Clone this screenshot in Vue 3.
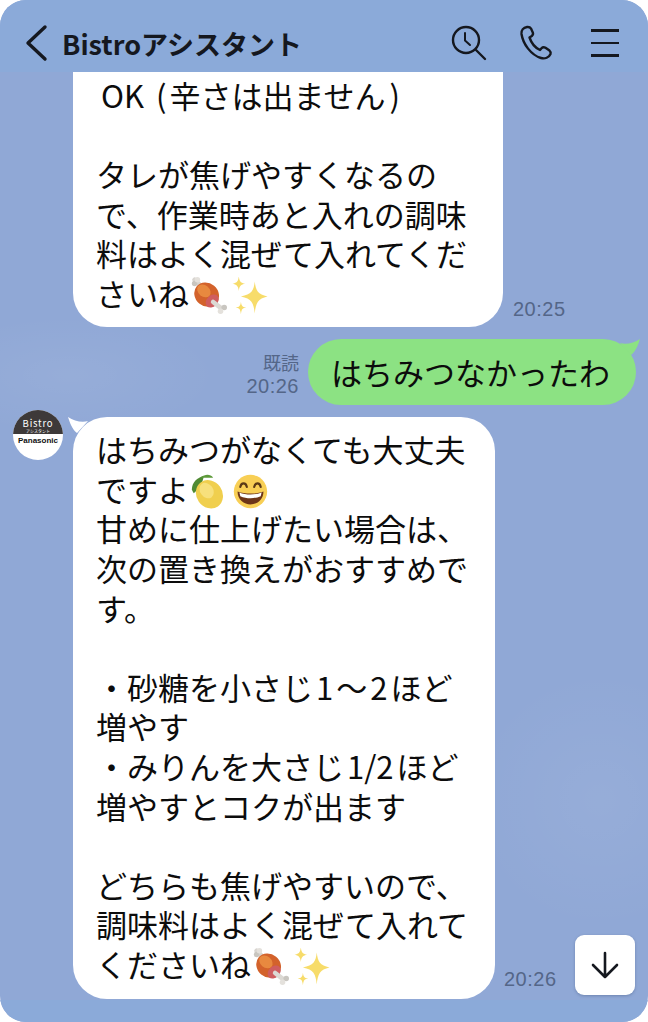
<script setup>
</script>

<template>
  <div class="screen">
    <header class="topbar">
      <svg class="back" width="26" height="38" viewBox="0 0 26 38" fill="none">
        <path d="M22 3 L5 19 L22 35" stroke="#15181f" stroke-width="3.4" stroke-linecap="round" stroke-linejoin="round" />
      </svg>
      <h1 class="title">Bistroアシスタント</h1>
      <div class="actions">
        <svg width="36" height="36" viewBox="0 0 36 36" fill="none" stroke="#15181f" stroke-width="2.4" stroke-linecap="round" stroke-linejoin="round">
          <circle cx="15" cy="15" r="13" />
          <path d="M14 8 V15.5 L19 20" stroke-width="2" />
          <path d="M25 25 L34 34" />
        </svg>
        <svg width="34" height="36" viewBox="0 0 34 36" fill="none" stroke="#15181f" stroke-width="2.4" stroke-linecap="round" stroke-linejoin="round">
          <path d="M8 2 C4.5 2.500 2 5 2.500 9 C4 19 12 30 22 33 C26 34.200 30 32.500 31.500 29 C32 27.500 31.500 26.500 30.500 25.600 L26.500 22.800 C25 21.800 23.600 22 22.500 23.200 L21 25 C15.500 22.500 12 17 10.500 12.500 L12.800 11 C14 10 14.300 8.800 13.800 7.400 L12 3.600 C11.300 2.400 9.800 1.800 8 2 Z" />
        </svg>
        <div class="menu"><span></span><span></span><span></span></div>
      </div>
    </header>

    <main class="chat">
      <div class="row first">
        <div class="bubble cut">
          <span class="ok">OK <span class="po">(</span>辛さは出ません<span class="pc">)</span></span><br /><br />
          タレが焦げやすくなるの<br />
          で、作業時あと入れの調味<br />
          料はよく混ぜて入れてくだ<br />
          さいね<svg class="emoji" viewBox="0 0 40 40">
            <use href="#meat-icon" />
          </svg><svg class="emoji" viewBox="0 0 40 40">
            <use href="#sparkle-icon" />
          </svg>
        </div>
        <time class="stamp">20:25</time>
      </div>

      <div class="row mine">
        <div class="meta">
          <span>既読</span>
          <time>20:26</time>
        </div>
        <div class="bubble green">
          はちみつなかったわ
          <svg class="tail right" width="20" height="16" viewBox="0 0 20 16">
            <path d="M0 4 C6 6 14 4 20 0 C18 6 16 12 11 16 Z" fill="#8ce283" />
          </svg>
        </div>
      </div>

      <div class="row theirs">
        <div class="avatar">
          <div class="avatar-top">
            <span class="brand">Bistro</span>
            <span class="brand-sub">アシスタント</span>
          </div>
          <div class="avatar-bottom">Panasonic</div>
        </div>
        <div class="bubble wide">
          <svg class="tail left" width="20" height="16" viewBox="0 0 20 16">
            <path d="M20 4 C14 6 6 4 0 0 C2 6 4 12 9 16 Z" fill="#fff" />
          </svg>
          はちみつがなくても大丈夫<br />
          ですよ<svg class="emoji" viewBox="0 0 40 40">
            <use href="#lemon-icon" />
          </svg><svg class="emoji" viewBox="0 0 40 40">
            <use href="#grin-icon" />
          </svg><br />
          甘めに仕上げたい場合は、<br />
          次の置き換えがおすすめで<br />
          す。<br /><br />
          ・砂糖を小さじ<span class="num">1</span>〜<span class="num">2</span>ほど<br />
          増やす<br />
          ・みりんを大さじ<span class="num">1/2</span>ほど<br />
          増やすとコクが出ます<br /><br />
          どちらも焦げやすいので、<br />
          調味料はよく混ぜて入れて<br />
          くださいね<svg class="emoji" viewBox="0 0 40 40">
            <use href="#meat-icon" />
          </svg><svg class="emoji" viewBox="0 0 40 40">
            <use href="#sparkle-icon" />
          </svg>
        </div>
        <time class="stamp">20:26</time>
      </div>
    </main>

    <button class="down">
      <svg width="30" height="30" viewBox="0 0 30 30" fill="none" stroke="#15181f" stroke-width="2.6" stroke-linecap="round" stroke-linejoin="round">
        <path d="M15 3 V27 M3 15 L15 27 L27 15" />
      </svg>
    </button>

    <svg class="defs" width="0" height="0">
      <defs>
        <g id="meat-icon">
          <path d="M5 3 L13 11" stroke="#d8d5d0" stroke-width="5" stroke-linecap="round" />
          <circle cx="5" cy="7" r="3" fill="#c9c6c0" />
          <circle cx="8" cy="3" r="3" fill="#e4e1dc" />
          <ellipse cx="18" cy="19" rx="14" ry="12.500" transform="rotate(40 18 19)" fill="#d3622b" />
          <ellipse cx="15" cy="15" rx="8" ry="6" transform="rotate(40 15 15)" fill="#e8893f" />
          <ellipse cx="24" cy="26" rx="8" ry="6" transform="rotate(-45 24 26)" fill="#cf5d5f" />
          <path d="M25 27 L34 34" stroke="#dcd9d4" stroke-width="5" stroke-linecap="round" />
          <circle cx="37" cy="33" r="3" fill="#c9c6c0" />
          <circle cx="33" cy="37" r="3" fill="#e4e1dc" />
        </g>
        <g id="sparkle-icon" fill="#f7dc6a" transform="translate(-3 -2) scale(1.15)">
          <path d="M24 6 C25 15 27 18 36 20 C27 22 25 26 24 36 C23 26 21 22 11 20 C21 18 23 15 24 6 Z" />
          <path d="M9 1 C9.500 6 11 7.500 15 8 C11 8.500 9.500 10 9 15 C8.500 10 7 8.500 3 8 C7 7.500 8.500 6 9 1 Z" />
          <path d="M11 25 C11.500 29 12.500 30 16 30.500 C12.500 31 11.500 32 11 37 C10.500 32 9.500 31 6 30.500 C9.500 30 10.500 29 11 25 Z" />
        </g>
        <g id="lemon-icon">
          <path d="M2 18 C2 10 8 5 15 3 C14 10 10 17 4 22 Z" fill="#4f8a32" />
          <path d="M12 5 C16 1 22 1 25 5 Z" fill="#5d9a3a" />
          <ellipse cx="21" cy="23" rx="16" ry="14" transform="rotate(55 21 23)" fill="#f0cf4e" />
          <ellipse cx="18" cy="19" rx="9" ry="7" transform="rotate(55 18 19)" fill="#f7e07c" />
        </g>
        <g id="grin-icon">
          <circle cx="20" cy="20" r="18" fill="#f8cf55" />
          <path d="M9 15 C10 10 15 10 16 15 M24 15 C25 10 30 10 31 15" fill="none" stroke="#5b3a17" stroke-width="2.400" stroke-linecap="round" />
          <path d="M6 20 C14 23 26 23 34 20 C34 29 27 34 20 34 C13 34 6 29 6 20 Z" fill="#6d3518" />
          <path d="M8 21 C15 24 25 24 32 21 L31 25 C24 28 16 28 9 25 Z" fill="#fff" />
        </g>
      </defs>
    </svg>
  </div>
</template>

<style scoped>
.screen {
  position: relative;
  width: 648px;
  height: 1022px;
  border-radius: 26px;
  overflow: hidden;
  display: flex;
  flex-direction: column;
  color: #111;
  font-family: "Noto Sans CJK JP", "Noto Sans", sans-serif;
  background:
    radial-gradient(ellipse 150px 60px at 70px 375px, rgba(255, 255, 255, 0.06), transparent),
    radial-gradient(ellipse 130px 130px at 600px 800px, rgba(255, 255, 255, 0.06), transparent),
    #90a8d6;
}

.topbar {
  height: 72px;
  box-sizing: border-box;
  flex-shrink: 0;
  display: flex;
  align-items: center;
  padding: 14px 29px 0 23px;
  background: #8baad9;
}

.back {
  margin-right: 13px;
}

.title {
  margin: 0;
  flex: 1;
  font-size: 27px;
  font-weight: 700;
  color: #15181f;
}

.actions {
  display: flex;
  align-items: center;
  gap: 32px;
}

.menu {
  width: 28px;
  margin-left: 6px;
  display: flex;
  flex-direction: column;
  gap: 10px;
}

.menu span {
  height: 2.400px;
  background: #15181f;
}

.chat {
  flex: 1;
  min-height: 0;
  display: flex;
  flex-direction: column;
  border-bottom: 22px solid #8baad9;
}

.row {
  display: flex;
  align-items: flex-end;
}

.first {
  padding-left: 73px;
}

.mine {
  justify-content: flex-end;
  margin-top: 12.500px;
  padding-right: 12px;
}

.theirs {
  margin-top: 12.500px;
  align-items: flex-start;
  padding-left: 13px;
}

.bubble {
  position: relative;
  padding: 12px 24px 16px 23px;
  background: #fff;
  border-radius: 34px;
  font-size: 31px;
  line-height: 39.600px;
  white-space: nowrap;
  color: #0c0c0c;
}

.cut {
  width: 430px;
  box-sizing: border-box;
  padding-top: 3px;
  padding-bottom: 14px;
  border-radius: 0 0 34px 34px;
}

.wide {
  width: 422px;
  box-sizing: border-box;
}

.ok {
  margin-left: 5px;
}

.po {
  margin: 0 3px 0 5px;
}

.pc {
  margin-left: 4px;
}

.num {
  margin: 0 3px;
}

.green {
  background: #8ce283;
  width: 328px;
  box-sizing: border-box;
  padding-top: 13px;
  padding-bottom: 13px;
}

.tail {
  position: absolute;
  top: 0;
}

.tail.right {
  right: -4px;
}

.tail.left {
  left: -5px;
}

.emoji {
  width: 37px;
  height: 37px;
  margin: -8px 4px -8px 1px;
}

.stamp,
.meta {
  font-family: "Liberation Sans", Arial, sans-serif;
  font-size: 20px;
  color: #546688;
}

.stamp {
  margin: 0 0 6px 10px;
  letter-spacing: 0.5px;
}

.theirs .stamp {
  align-self: flex-end;
  margin: 0 0 8px 9px;
}

.meta {
  display: flex;
  flex-direction: column;
  align-items: flex-end;
  margin-right: 9px;
  margin-bottom: 7px;
  line-height: 24px;
}

.meta span {
  font-family: "Noto Sans CJK JP", sans-serif;
  font-size: 18px;
}

.meta time {
  letter-spacing: 0.5px;
}

.avatar {
  width: 50px;
  height: 50px;
  margin-top: -7px;
  margin-right: 10px;
  flex-shrink: 0;
  border-radius: 50%;
  overflow: hidden;
  background: #fff;
  text-align: center;
}

.avatar-top {
  height: 24px;
  box-sizing: border-box;
  padding-top: 8px;
  background: #3d3939;
  color: #fff;
  display: flex;
  flex-direction: column;
  align-items: center;
}

.brand {
  font-size: 9.500px;
  line-height: 11px;
  letter-spacing: 0.8px;
}

.brand-sub {
  font-size: 4px;
  line-height: 5px;
}

.avatar-bottom {
  font-family: "Liberation Sans", Arial, sans-serif;
  font-size: 8px;
  font-weight: 700;
  line-height: 14px;
  color: #111;
}

.down {
  position: absolute;
  right: 13px;
  bottom: 27px;
  width: 60px;
  height: 60px;
  padding: 0;
  border: 0;
  border-radius: 9px;
  background: #fff;
  box-shadow: 0 1px 3px rgba(60, 80, 120, 0.4);
  display: flex;
  align-items: center;
  justify-content: center;
}

.defs {
  position: absolute;
}
</style>

<style>
body {
  background: #fff;
}
</style>
